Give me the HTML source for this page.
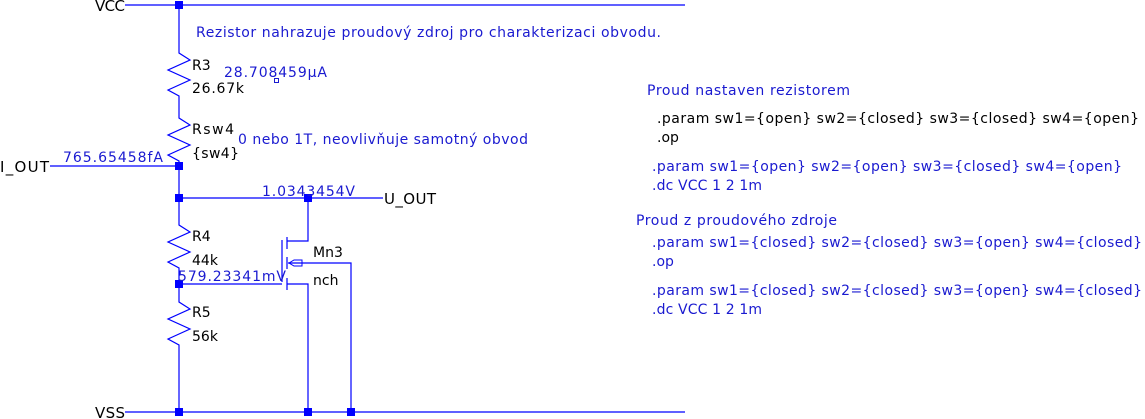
<!DOCTYPE html>
<html><head><meta charset="utf-8"><style>
html,body{margin:0;padding:0;background:#fff;}
svg{display:block}
text{font-family:"DejaVu Sans","Liberation Sans",sans-serif;font-size:14px;}
.b{fill:#1a1ad0}
.k{fill:#000}
.n{font-size:15px}
</style></head><body>
<svg width="1145" height="419" viewBox="0 0 1145 419" xmlns="http://www.w3.org/2000/svg">
<g stroke="#0000ff" stroke-width="1.2" fill="none">
<line x1="125" y1="5" x2="685" y2="5"/>
<line x1="125" y1="412" x2="685" y2="412"/>
<polyline points="179,5 179,53 190,60 168,70 190,80 168,90 179,96 179,118 190,125 168,135 190,145 168,155 179,161 179,225 190,232 168,242 190,252 168,262 179,268 179,302 190,309 168,319 190,329 168,339 179,345 179,412"/>
<line x1="50" y1="166" x2="179" y2="166"/>
<line x1="179" y1="198" x2="383" y2="198"/>
<polyline points="308,198 308,241 287,241"/>
<line x1="179" y1="284" x2="282" y2="284"/>
<line x1="282" y1="240" x2="282" y2="282"/>
<line x1="287" y1="237" x2="287" y2="249"/>
<line x1="287" y1="257" x2="287" y2="269"/>
<line x1="287" y1="278" x2="287" y2="290"/>
<polyline points="287,284 308,284 308,412"/>
<polyline points="288,263 351,263 351,412"/>
<polygon points="289,263 294,260 302,260 302,266 294,266" stroke-width="1"/>
</g>
<g fill="#0000ff">
<rect x="175" y="1" width="8" height="8"/>
<rect x="175" y="162" width="8" height="8"/>
<rect x="175" y="194" width="8" height="8"/>
<rect x="304" y="194" width="8" height="8"/>
<rect x="175" y="280" width="8" height="8"/>
<rect x="175" y="408" width="8" height="8"/>
<rect x="304" y="408" width="8" height="8"/>
<rect x="347" y="408" width="8" height="8"/>
</g>
<rect x="274.5" y="78.5" width="4" height="4" fill="none" stroke="#1a1ad0" stroke-width="1"/>
<text class="k n" x="95" y="11" textLength="30">VCC</text>
<text class="k n" x="95" y="418" textLength="30">VSS</text>
<text class="k n" x="0" y="172" textLength="49">I_OUT</text>
<text class="k n" x="384" y="204" textLength="52">U_OUT</text>
<text class="k" x="192" y="70">R3</text>
<text class="k" x="192" y="93" textLength="52">26.67k</text>
<text class="k" x="192" y="134" textLength="42">Rsw4</text>
<text class="k" x="192" y="158" textLength="47">{sw4}</text>
<text class="k" x="192" y="241">R4</text>
<text class="k" x="192" y="265">44k</text>
<text class="k" x="192" y="317">R5</text>
<text class="k" x="192" y="341">56k</text>
<text class="k" x="313" y="257">Mn3</text>
<text class="k" x="313" y="285">nch</text>
<text class="b" x="196" y="37" textLength="465">Rezistor nahrazuje proudový zdroj pro charakterizaci obvodu.</text>
<text class="b" x="224" y="77" textLength="103">28.708459µA</text>
<text class="b" x="238" y="144" textLength="290">0 nebo 1T, neovlivňuje samotný obvod</text>
<text class="b" x="63" y="162" textLength="100">765.65458fA</text>
<text class="b" x="262" y="196" textLength="93">1.0343454V</text>
<text class="b" x="178" y="281" textLength="108">579.23341mV</text>
<text class="b" x="647" y="95" textLength="203">Proud nastaven rezistorem</text>
<text class="k" x="657" y="123" textLength="482">.param sw1={open} sw2={closed} sw3={closed} sw4={open}</text>
<text class="k" x="657" y="142">.op</text>
<text class="b" x="652" y="171" textLength="470">.param sw1={open} sw2={open} sw3={closed} sw4={open}</text>
<text class="b" x="652" y="190" textLength="110">.dc VCC 1 2 1m</text>
<text class="b" x="636" y="225" textLength="201">Proud z proudového zdroje</text>
<text class="b" x="652" y="247" textLength="490">.param sw1={closed} sw2={closed} sw3={open} sw4={closed}</text>
<text class="b" x="652" y="266">.op</text>
<text class="b" x="652" y="295" textLength="490">.param sw1={closed} sw2={closed} sw3={open} sw4={closed}</text>
<text class="b" x="652" y="314" textLength="110">.dc VCC 1 2 1m</text>
</svg>
</body></html>
